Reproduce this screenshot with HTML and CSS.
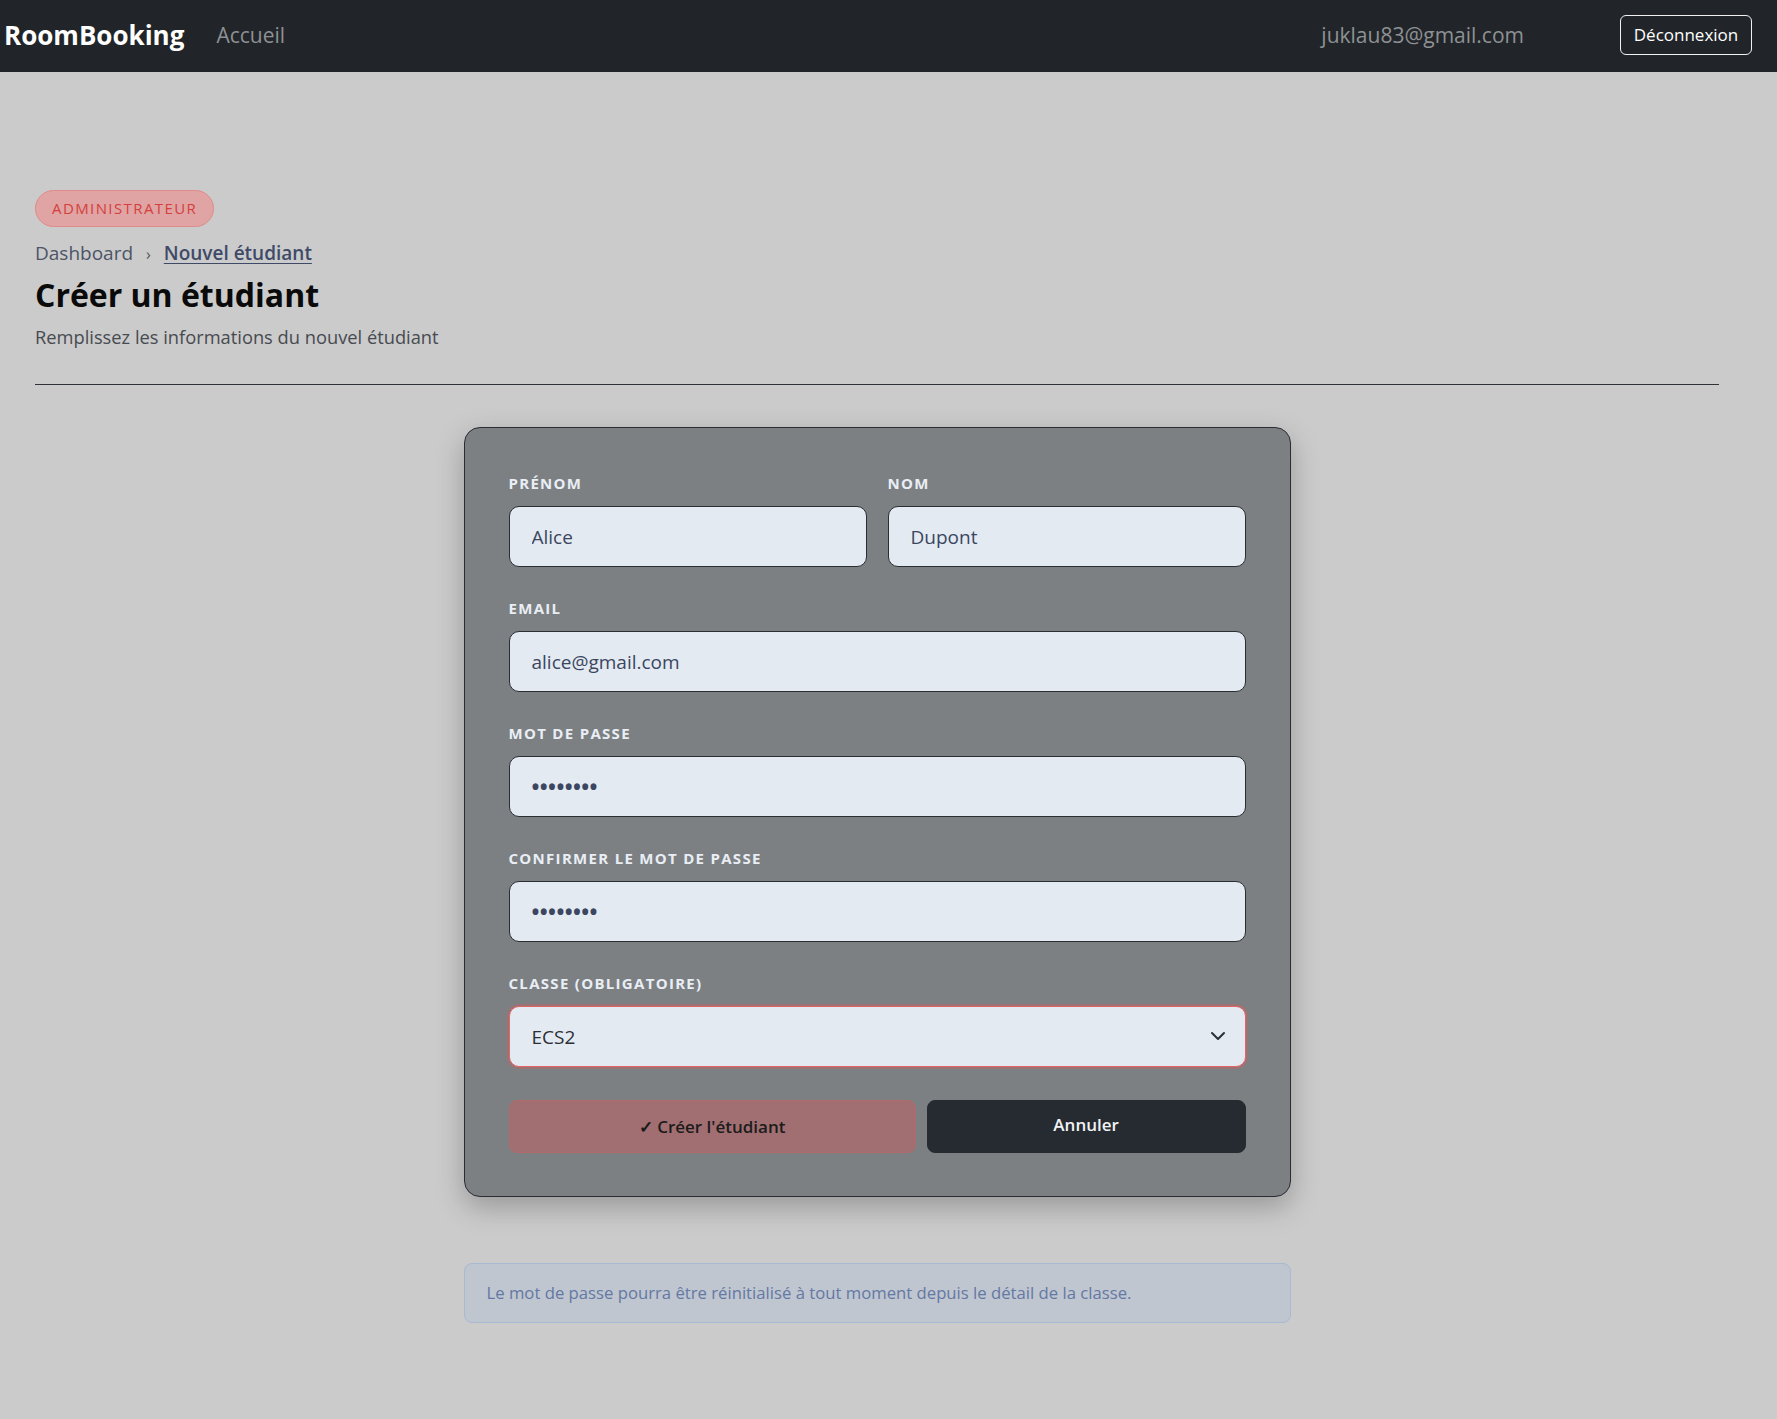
FILE: index.html
```html
<!DOCTYPE html>
<html lang="fr">
<head>
    <meta charset="UTF-8">
    <meta name="viewport" content="width=device-width, initial-scale=1.0">
    <title>Créer un étudiant - RoomBooking</title>
    <link rel="stylesheet" href="styles.css">
</head>
<body>

<nav class="navbar">
    <div class="nav-left">
        <a class="brand" href="#">RoomBooking</a>
        <a class="nav-link" href="#">Accueil</a>
    </div>
    <div class="nav-right">
        <span class="nav-user">juklau83@gmail.com</span>
        <button class="btn-logout" type="button">Déconnexion</button>
    </div>
</nav>

<main class="page">
    <span class="badge">ADMINISTRATEUR</span>
    <div class="crumbs">
        <span class="crumb">Dashboard</span>
        <span class="crumb-sep">›</span>
        <a class="crumb-current" href="#">Nouvel étudiant</a>
    </div>
    <h1>Créer un étudiant</h1>
    <p class="subtitle">Remplissez les informations du nouvel étudiant</p>
    <hr class="divider">

    <form class="card">
        <div class="row-2">
            <div class="field">
                <label for="prenom">Prénom</label>
                <input type="text" id="prenom" value="Alice">
            </div>
            <div class="field">
                <label for="nom">Nom</label>
                <input type="text" id="nom" value="Dupont">
            </div>
        </div>
        <div class="field">
            <label for="email">Email</label>
            <input type="email" id="email" value="alice@gmail.com">
        </div>
        <div class="field">
            <label for="password">Mot de passe</label>
            <input type="password" id="password" value="password">
        </div>
        <div class="field">
            <label for="confirm">Confirmer le mot de passe</label>
            <input type="password" id="confirm" value="password">
        </div>
        <div class="field">
            <label for="classe">Classe (obligatoire)</label>
            <div class="select-wrap">
                <select id="classe" class="select-required">
                    <option>ECS2</option>
                </select>
                <svg class="chevron" width="16" height="16" viewBox="0 0 16 16" fill="none" stroke="#2b2f36" stroke-width="2" stroke-linecap="round" stroke-linejoin="round">
                    <path d="M2 5l6 6 6-6"/>
                </svg>
            </div>
        </div>
        <div class="actions">
            <button type="button" class="btn-create">✓ Créer l'étudiant</button>
            <button type="button" class="btn-cancel">Annuler</button>
        </div>
    </form>

    <div class="info">Le mot de passe pourra être réinitialisé à tout moment depuis le détail de la classe.</div>
</main>

</body>
</html>
```

FILE: styles.css
```css
body {
    font-family: "Open Sans", "Noto Sans", sans-serif;
    margin: 0;
    background-color: #cbcbcb;
    color: #111;
}
.navbar {
    height: 72px;
    background-color: #212529;
    display: flex;
    justify-content: space-between;
    align-items: center;
    padding: 0 25px 0 4px;
}
.nav-left,
.nav-right {
    display: flex;
    align-items: center;
}
.nav-left {
    margin-top: -2px;
}
.brand {
    color: #fff;
    font-weight: 700;
    font-size: 26px;
    text-decoration: none;
}
.nav-link {
    color: #8e9194;
    font-size: 21px;
    text-decoration: none;
    margin-left: 32px;
}
.nav-user {
    color: #8e9194;
    font-size: 21px;
    margin-bottom: 3px;
}
.btn-logout {
    margin-left: 96px;
    margin-bottom: 3px;
    height: 40px;
    width: 132px;
    background: transparent;
    color: #fff;
    border: 1px solid #f2f2f2;
    border-radius: 6px;
    font-family: inherit;
    font-size: 17px;
    padding: 0;
}
.page {
    width: 1684px;
    margin-left: 35px;
    padding-top: 118px;
    padding-bottom: 80px;
}
.badge {
    display: inline-block;
    height: 35px;
    line-height: 35px;
    padding: 0 16px;
    border: 1px solid #e08a8a;
    border-radius: 20px;
    background-color: #e0a4a4;
    color: #d4403c;
    font-size: 15px;
    font-weight: 500;
    letter-spacing: 1.4px;
}
.crumbs {
    margin-top: 12px;
    font-size: 19px;
    line-height: 28px;
    color: #4c5466;
}
.crumb-sep {
    margin: 0 8px;
    font-size: 16px;
    color: #555;
}
.crumb-current {
    color: #3f4a68;
    font-weight: 600;
    text-decoration: underline;
    text-underline-offset: 3px;
}
h1 {
    margin: 6px 0 0;
    font-size: 32px;
    line-height: 41px;
    font-weight: 700;
    color: #0a0a0a;
}
.subtitle {
    margin: 8px 0 0;
    font-size: 18.3px;
    line-height: 27px;
    color: #474a50;
}
.divider {
    margin: 34px 0 0;
    border: 0;
    border-top: 1px solid #2f3338;
}
.card {
    width: 827px;
    box-sizing: border-box;
    margin: 42px auto 0;
    padding: 45px 44px 43px;
    background-color: #7c8083;
    border: 1px solid #2a2e33;
    border-radius: 16px;
    box-shadow: 0 10px 28px rgba(0, 0, 0, 0.25);
    display: flex;
    flex-direction: column;
    gap: 31px;
}
.row-2 {
    display: grid;
    grid-template-columns: 1fr 1fr;
    gap: 21px;
}
.field {
    display: flex;
    flex-direction: column;
    gap: 13px;
}
.field label {
    font-size: 15px;
    line-height: 20px;
    font-weight: 700;
    letter-spacing: 1.3px;
    text-transform: uppercase;
    color: #e9eef5;
}
.field input,
.field select {
    height: 61px;
    box-sizing: border-box;
    padding: 0 22px;
    border: 1px solid #2a2e33;
    border-radius: 10px;
    background-color: #e4eaf2;
    color: #3b4660;
    font-family: inherit;
    font-size: 19px;
    outline: none;
    width: 100%;
}
.field input[type="password"] {
    font-size: 21px;
    letter-spacing: 0.4px;
    font-weight: 700;
}
.select-wrap {
    position: relative;
}
.field select {
    appearance: none;
    -webkit-appearance: none;
    color: #2b2f36;
}
.select-required {
    border-color: #e06565 !important;
    box-shadow: 0 0 0 2px rgba(222, 90, 90, 0.35);
}
.chevron {
    position: absolute;
    right: 20px;
    top: 22px;
    pointer-events: none;
}
.actions {
    display: flex;
    gap: 11px;
    margin-top: 2px;
}
.actions button {
    height: 53px;
    border-radius: 8px;
    font-family: inherit;
    font-size: 17px;
    font-weight: 600;
}
.btn-create {
    flex: 409 1 0;
    background-color: #a16f71;
    border: 1px solid #b36a6a;
    color: #1b1b1b;
}
.btn-cancel {
    flex: 317 1 0;
    background-color: #262b32;
    border: 1px solid #262b32;
    color: #f1f3f6;
    padding-bottom: 5px;
}
.info {
    width: 827px;
    box-sizing: border-box;
    margin: 66px auto 0;
    padding: 0 22px;
    height: 60px;
    line-height: 58px;
    border: 1px solid #a9b9d2;
    border-radius: 8px;
    background-color: #bfc6d0;
    color: #6478a3;
    font-size: 16.7px;
}
```
